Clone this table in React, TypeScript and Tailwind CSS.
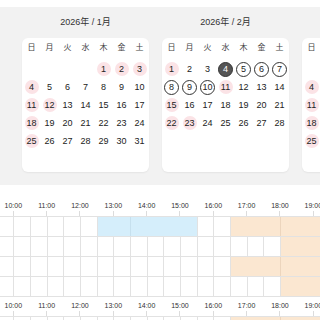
import React from 'react';
import clsx from 'clsx';

type Month = {
  title: string;
  offset: number;
  days: number;
  pink: number[];
  ring: number[];
  filled: number[];
};

const months: Month[] = [
  { title: '2026年 / 1月', offset: 4, days: 31, pink: [1, 2, 3, 4, 11, 12, 18, 25], ring: [], filled: [] },
  { title: '2026年 / 2月', offset: 0, days: 28, pink: [1, 11, 15, 22, 23], ring: [5, 6, 7, 8, 9, 10], filled: [4] },
  { title: '2026年 / 3月', offset: 4, days: 31, pink: [4, 11, 18, 25], ring: [], filled: [] },
];

const weekdays = ['日', '月', '火', '水', '木', '金', '土'];

type Kind = 'blue' | 'orange' | null;
type Row = { blue?: [number, number]; orange?: [number, number]; dividers: number[] };

const rows: Row[] = [
  { blue: [6, 12], orange: [14, 21], dividers: [8, 17] },
  { orange: [17, 21], dividers: [] },
  { orange: [14, 21], dividers: [17] },
  { orange: [17, 21], dividers: [] },
];
const lastRow: Row = { orange: [14, 21], dividers: [17] };

const hours = ['10:00', '11:00', '12:00', '13:00', '14:00', '15:00', '16:00', '17:00', '18:00', '19:00', '20:00'];

function kindAt(row: Row, i: number): Kind {
  if (row.blue && i >= row.blue[0] && i < row.blue[1]) return 'blue';
  if (row.orange && i >= row.orange[0] && i < row.orange[1]) return 'orange';
  return null;
}

function MonthCard({ m }: { m: Month }) {
  const cells: (number | null)[] = [];
  for (let i = 0; i < m.offset; i++) cells.push(null);
  for (let d = 1; d <= m.days; d++) cells.push(d);
  while (cells.length < 42) cells.push(null);

  return (
    <div className="w-[127px] shrink-0">
      <div className="h-[31px] flex items-center justify-center text-[9px] text-[#333]">{m.title}</div>
      <div className="h-[134px] bg-white rounded-[6px] shadow-[0_1px_2px_rgba(0,0,0,0.06)] px-[0.5px] pt-[1px]">
        <div className="grid grid-cols-7 h-[18px]">
          {weekdays.map((w) => (
            <div key={w} className="flex items-center justify-center text-[8px] text-[#444]">
              {w}
            </div>
          ))}
        </div>
        <div className="grid grid-cols-7 auto-rows-[18px] mt-[3px]">
          {cells.map((d, i) => {
            const filled = d !== null && m.filled.includes(d);
            const ring = d !== null && m.ring.includes(d);
            const pink = d !== null && m.pink.includes(d);
            return (
              <div key={i} className="flex items-center justify-center">
                {d !== null && (
                  <span
                    className={clsx(
                      'flex items-center justify-center rounded-full text-[9px] leading-none',
                      filled && 'w-[15px] h-[15px] bg-[#555] border border-[#333] text-white',
                      !filled && ring && 'w-[15px] h-[15px] border border-[#333] text-[#222]',
                      !filled && !ring && pink && 'w-[14px] h-[14px] bg-[#fbe3e6] text-[#222]',
                      !filled && !ring && !pink && 'w-[14px] h-[14px] text-[#222]'
                    )}
                  >
                    {d}
                  </span>
                )}
              </div>
            );
          })}
        </div>
      </div>
    </div>
  );
}

function LabelRow({ tall }: { tall?: boolean }) {
  return (
    <div className={clsx('flex ml-[-3.333px]', tall ? 'h-[31px]' : 'h-[19px]')}>
      {hours.map((h) => (
        <div key={h} className="w-[33.333px] shrink-0 flex flex-col items-center justify-end">
          <span className="text-[7px] leading-[9px] text-[#333] whitespace-nowrap">{h}</span>
          <span className="w-px h-[5px] bg-[#dcdcdc] mt-[1px]" />
        </div>
      ))}
    </div>
  );
}

function GridRow({ row, className }: { row: Row; className?: string }) {
  return (
    <div className={clsx('flex ml-[-3.333px] border-b border-[#e2e2e2]', className)}>
      {Array.from({ length: 21 }).map((_, i) => {
        const k = kindAt(row, i);
        const prev = i > 0 ? kindAt(row, i - 1) : null;
        const divider = row.dividers.includes(i);
        return (
          <div
            key={i}
            className={clsx(
              'w-[16.667px] shrink-0 h-full border-l',
              k === null && 'border-[#e2e2e2]',
              k === 'blue' && 'bg-[#d5eefb]',
              k === 'blue' && prev !== 'blue' && 'border-[#e2e2e2]',
              k === 'blue' && prev === 'blue' && (divider ? 'border-[#c6e0ee]' : 'border-[#d5eefb]'),
              k === 'orange' && 'bg-[#fbe7d1]',
              k === 'orange' && prev !== 'orange' && 'border-[#e2e2e2]',
              k === 'orange' && prev === 'orange' && (divider ? 'border-[#ecd5bd]' : 'border-[#fbe7d1]')
            )}
          />
        );
      })}
    </div>
  );
}

export default function App() {
  return (
    <div className="w-[320px] h-[320px] overflow-hidden bg-white font-['Liberation_Sans','Noto_Sans_CJK_JP',sans-serif]">
      <div className="h-[7px] bg-white" />
      <div className="h-[178px] bg-[#f2f2f2] overflow-hidden">
        <div className="flex gap-[13px] pl-[22px]">
          {months.map((m) => (
            <MonthCard key={m.title} m={m} />
          ))}
        </div>
      </div>
      <div className="overflow-hidden">
        <LabelRow tall />
        <GridRow row={rows[0]} className="h-[21px] border-t" />
        <GridRow row={rows[1]} className="h-[20px]" />
        <GridRow row={rows[2]} className="h-[20px]" />
        <GridRow row={rows[3]} className="h-[20px]" />
        <LabelRow />
        <GridRow row={lastRow} className="h-[20px] border-t" />
      </div>
    </div>
  );
}
